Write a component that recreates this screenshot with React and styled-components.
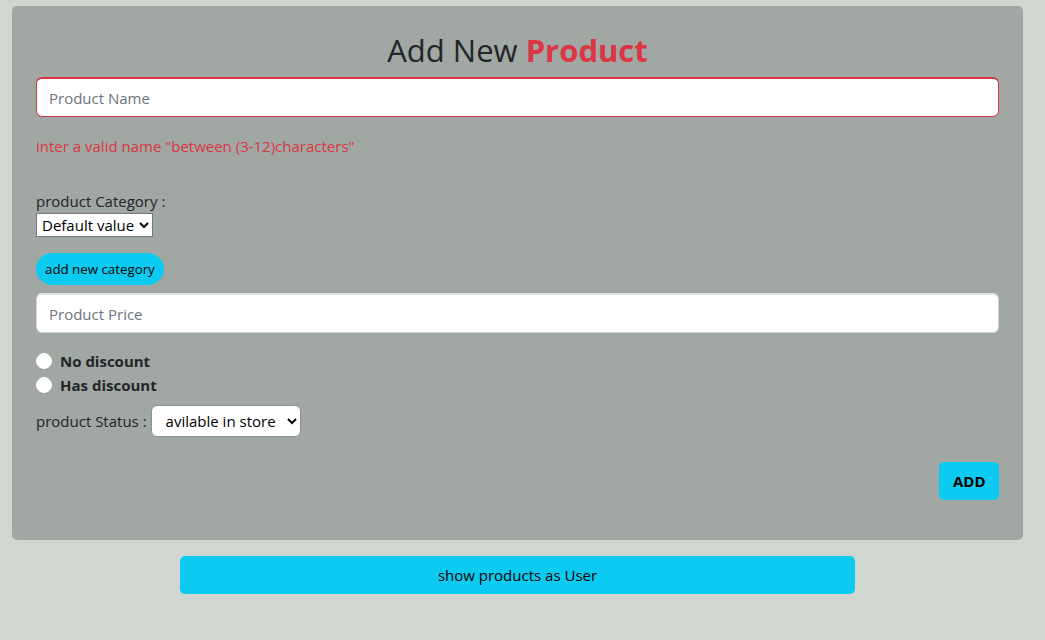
import React from 'react';
import styled, { createGlobalStyle } from 'styled-components';

const GlobalStyle = createGlobalStyle`
  body {
    margin: 0;
    background: #d0d6d0;
    font-family: "Open Sans", "Noto Sans", sans-serif;
    color: #212529;
  }
`;

const Page = styled.div`
  padding: 6px 22px 40px 12px;
`;

const Card = styled.form`
  background: #a1a7a2;
  border-radius: 5px;
  padding: 25px 24px 40px;
  display: flex;
  flex-direction: column;
  align-items: flex-start;
`;

const Title = styled.h1`
  align-self: stretch;
  margin: 0;
  text-align: center;
  font-size: 31px;
  font-weight: 500;
  line-height: 38px;
  color: #212529;
  span {
    color: #dc3545;
    font-weight: 700;
  }
`;

const TextInput = styled.input`
  box-sizing: border-box;
  align-self: stretch;
  height: 40px;
  margin-top: ${(p) => p.$mt || 0}px;
  padding: 0 12px;
  font: inherit;
  font-size: 15px;
  background: #fff;
  border: 1px solid ${(p) => (p.$invalid ? '#dc3545' : '#ced4da')};
  border-top-width: 2px;
  border-top-color: ${(p) => (p.$invalid ? '#dc3545' : '#e4e6e8')};
  border-radius: 6px;
  outline: none;
  &::placeholder {
    color: #6c757d;
  }
`;

const ErrorText = styled.div`
  margin-top: 17px;
  font-size: 15px;
  line-height: 24px;
  color: #dc3545;
`;

const Label = styled.label`
  font-size: 15px;
  line-height: 24px;
  color: #212529;
  margin-top: ${(p) => p.$mt || 0}px;
`;

const PlainSelect = styled.select`
  height: 24px;
  font: inherit;
  font-size: 15px;
  background: #fff;
  border: 1px solid #767676;
  border-radius: 0;
  padding: 0 1px;
  color: #000;
`;

const PillButton = styled.button`
  margin-top: 16px;
  height: 32px;
  padding: 0 9px;
  border: none;
  border-radius: 16px;
  background: #0dcaf0;
  color: #000;
  font: inherit;
  font-size: 13.3px;
  cursor: pointer;
`;

const RadioGroup = styled.div`
  margin-top: 16px;
  display: flex;
  flex-direction: column;
`;

const RadioRow = styled.label`
  display: flex;
  align-items: center;
  gap: 8px;
  height: 24px;
  font-size: 15px;
  font-weight: 700;
  color: #212529;
`;

const Radio = styled.input.attrs({ type: 'radio' })`
  appearance: none;
  margin: 0;
  width: 16px;
  height: 16px;
  border-radius: 50%;
  background: #fff;
  border: 1px solid #fff;
`;

const StatusRow = styled.div`
  margin-top: 8px;
  display: flex;
  align-items: center;
  gap: 4px;
`;

const RoundSelect = styled.select`
  height: 32px;
  font: inherit;
  font-size: 15px;
  background: #fff;
  border: 1px solid #8a8f94;
  border-radius: 6px;
  padding: 0 8px 0 10px;
  color: #000;
`;

const AddButton = styled.button`
  align-self: flex-end;
  margin-top: 25px;
  height: 38px;
  padding: 0 13.5px;
  border: none;
  border-radius: 5px;
  background: #0dcaf0;
  color: #000;
  font: inherit;
  font-size: 15px;
  font-weight: 700;
  cursor: pointer;
`;

const ShowButton = styled.button`
  display: block;
  width: 675px;
  height: 38px;
  margin: 16px auto 0;
  border: none;
  border-radius: 5px;
  background: #0dcaf0;
  color: #000;
  font: inherit;
  font-size: 15px;
  cursor: pointer;
`;

export default function App() {
  return (
    <Page>
      <GlobalStyle />
      <Card onSubmit={(e) => e.preventDefault()}>
        <Title>
          Add New <span>Product</span>
        </Title>
        <TextInput $mt={8} $invalid placeholder="Product Name" />
        <ErrorText>inter a valid name "between (3-12)characters"</ErrorText>
        <Label $mt={31}>product Category :</Label>
        <PlainSelect defaultValue="default">
          <option value="default">Default value</option>
        </PlainSelect>
        <PillButton type="button">add new category</PillButton>
        <TextInput $mt={8} placeholder="Product Price" />
        <RadioGroup>
          <RadioRow>
            <Radio name="discount" />
            No discount
          </RadioRow>
          <RadioRow>
            <Radio name="discount" />
            Has discount
          </RadioRow>
        </RadioGroup>
        <StatusRow>
          <Label>product Status :</Label>
          <RoundSelect defaultValue="store">
            <option value="store">avilable in store</option>
          </RoundSelect>
        </StatusRow>
        <AddButton type="submit">ADD</AddButton>
      </Card>
      <ShowButton type="button">show products as User</ShowButton>
    </Page>
  );
}
